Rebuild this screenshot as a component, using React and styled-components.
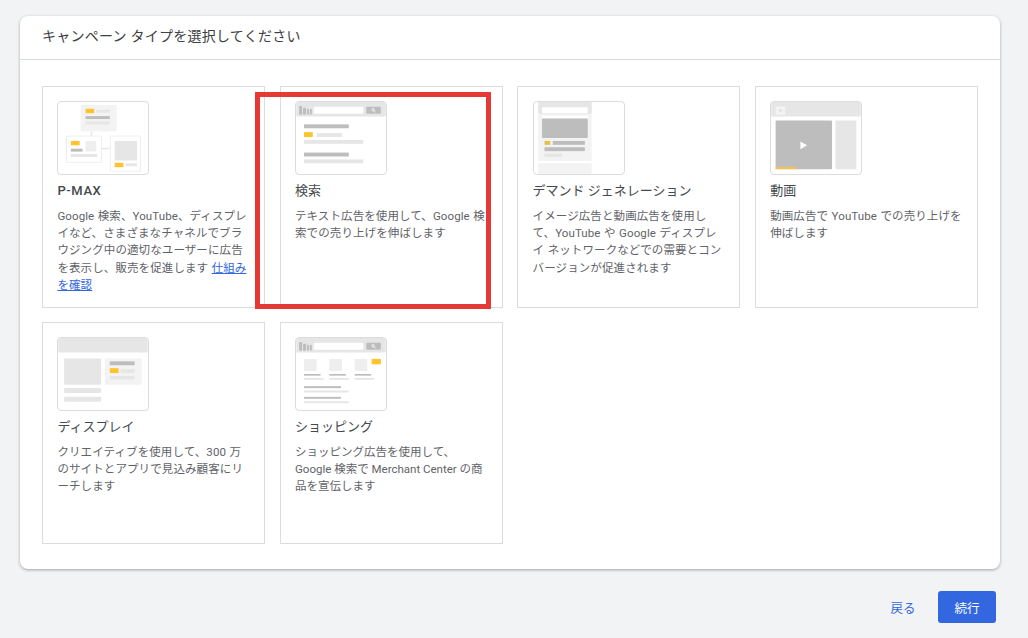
import React from 'react';
import styled, { createGlobalStyle } from 'styled-components';

const GlobalStyle = createGlobalStyle`
  html, body {
    margin: 0;
    height: 100%;
    background-color: #f1f3f4;
  }
  body {
    font-family: Roboto, 'Noto Sans CJK JP', sans-serif;
    overflow: hidden;
  }
  * {
    box-sizing: border-box;
  }
`;

const Page = styled.div`
  width: 1028px;
  height: 638px;
  padding: 16px 28px 0 20px;
`;

const Panel = styled.section`
  width: 980px;
  height: 553px;
  background-color: #fff;
  border-radius: 8px;
  box-shadow: 0 1px 3px rgba(60, 64, 67, 0.45);
`;

const PanelHeader = styled.h1`
  margin: 0;
  height: 44px;
  padding: 0 22px 6px;
  display: flex;
  align-items: center;
  border-bottom: 1px solid #dadce0;
  font-size: 14px;
  font-weight: 400;
  letter-spacing: 0.25px;
  color: #3c4043;
`;

const CardGrid = styled.div`
  display: grid;
  grid-template-columns: repeat(4, 223px);
  grid-auto-rows: 222px;
  column-gap: 14.6px;
  row-gap: 14px;
  padding: 26px 22px 0;
`;

const Card = styled.article`
  position: relative;
  padding: 14px 15px 14px 14.4px;
  border: 1px solid #dadce0;
  background-color: #fff;
`;

const Highlight = styled.div`
  position: absolute;
  left: -26px;
  top: 5px;
  width: 236px;
  height: 217px;
  border: 5px solid #e53935;
  pointer-events: none;
`;

const Thumb = styled.svg`
  display: block;
  width: 92px;
  height: 74px;
  border: 1px solid #dadce0;
  border-radius: 4px;
  background-color: #fff;
`;

const CardTitle = styled.h2`
  margin: 7px 0 0;
  font-size: 13px;
  line-height: 18px;
  font-weight: ${({ $bold }) => ($bold ? 500 : 400)};
  letter-spacing: ${({ $bold }) => ($bold ? '0.6px' : '0')};
  color: #45494d;
`;

const CardText = styled.p`
  margin: 8px 0 0;
  font-size: 11.5px;
  line-height: 17.2px;
  letter-spacing: ${({ $tight }) => ($tight ? '0' : '0.1px')};
  word-spacing: ${({ $tight }) => ($tight ? '0' : '0.5px')};
  color: #5f6368;
`;

const LearnLink = styled.a`
  color: #3367e0;
  text-decoration: underline;
`;

const Footer = styled.footer`
  display: flex;
  justify-content: flex-end;
  align-items: center;
  gap: 9px;
  margin-top: 22px;
  width: 976px;
`;

const BackButton = styled.button`
  width: 52px;
  height: 32px;
  border: 0;
  padding: 0;
  background: none;
  font: inherit;
  font-size: 12.5px;
  color: #3367e0;
`;

const NextButton = styled(BackButton)`
  width: 58px;
  background-color: #3367e0;
  border-radius: 3px;
  color: #fff;
`;

const YELLOW = '#ffc42d';
const DARK = '#bdbdbd';
const MID = '#e6e6e6';
const PALE = '#f3f3f3';

// each row: x, y, w, h, fill
const Bars = ({ rows }) =>
  rows.map(([x, y, w, h, fill], i) => (
    <rect key={i} x={x} y={y} width={w} height={h} fill={fill} rx={h > 4.5 && fill !== YELLOW ? 1 : 0} />
  ));

const searchBar = [
  [0, 0, 92, 15, MID],
  [3, 4, 3, 9, DARK],
  [7, 6, 3, 7, DARK],
  [11, 7, 2, 6, DARK],
  [14, 7, 2, 6, DARK],
  [18, 5, 51, 7, '#fff'],
  [72, 5, 15, 7, DARK],
];

const Magnifier = () => (
  <g stroke="#fff" fill="none" strokeWidth="0.8">
    <circle cx="79" cy="8" r="1.3" />
    <path d="M80 9l1.6 1.5" />
  </g>
);

const thumbs = {
  pmax: (
    <>
      <Bars
        rows={[
          [23, 3, 37, 27, PALE],
          [28, 7, 9, 4.5, YELLOW],
          [39, 8, 14, 3, MID],
          [28, 14.5, 25, 3, DARK],
          [28, 20, 25, 3, MID],
          [33.5, 30, 1.5, 5, MID],
          [45, 47, 8, 1.5, MID],
          [13, 40, 9, 4.5, YELLOW],
          [28, 40, 11, 11, '#eeeeee'],
          [13, 48, 12, 3, DARK],
          [13, 53.5, 27, 3, MID],
          [58, 40, 23, 20, MID],
          [58, 62.5, 9, 4.5, YELLOW],
          [69, 63, 12, 3, MID],
        ]}
      />
      <rect x="8.5" y="35" width="36" height="27" fill="none" stroke="#eeeeee" />
      <rect x="53.5" y="35" width="31" height="36" fill="none" stroke="#eeeeee" />
    </>
  ),
  search: (
    <>
      <Bars
        rows={[
          ...searchBar,
          [8, 23, 46, 4, DARK],
          [8, 31, 9, 5, YELLOW],
          [21, 32, 26, 4, MID],
          [8, 39, 61, 4, MID],
          [8, 52, 46, 4, DARK],
          [8, 59, 61, 4, MID],
        ]}
      />
      <Magnifier />
    </>
  ),
  demand: (
    <Bars
      rows={[
        [4, 0, 55, 74, PALE],
        [4, 0, 55, 12, MID],
        [8, 5.5, 47, 6, '#fff'],
        [8, 14, 47, 3, '#fff'],
        [8, 17, 47, 20, DARK],
        [10.5, 40, 6, 4, '#e6c04a'],
        [19, 40, 33, 4, DARK],
        [10.5, 46.5, 41.5, 4, DARK],
        [10.5, 53, 18, 3.5, MID],
        [4, 60.5, 55, 2.5, '#fff'],
      ]}
    />
  ),
  video: (
    <>
      <Bars
        rows={[
          [0, 0, 92, 15, MID],
          [4.5, 4.5, 10, 8.5, PALE],
          [4.5, 19, 58, 50, DARK],
          [66, 19, 21.5, 50, MID],
        ]}
      />
      <path d="M8.5 6.8l3.2 2-3.2 2z" fill="#dddddd" />
      <path d="M30 40.5l6.8 4-6.8 4z" fill="#fff" />
      <rect x="4.5" y="67" width="22" height="2" fill="#f4c44c" />
    </>
  ),
  display: (
    <Bars
      rows={[
        [0, 0, 92, 15, MID],
        [6, 21, 38, 27, MID],
        [48, 21, 38, 27, PALE],
        [53, 24, 25.5, 4, DARK],
        [53, 31, 9, 5, YELLOW],
        [64, 32, 14.5, 4, MID],
        [53, 39, 25.5, 3.5, MID],
        [6, 51.5, 38, 5, MID],
        [6, 60.5, 38, 5, MID],
      ]}
    />
  ),
  shopping: (
    <>
      <Bars
        rows={[
          ...searchBar,
          [8, 21.5, 13, 12.5, '#eeeeee'],
          [34, 21.5, 13, 12.5, '#eeeeee'],
          [60, 21.5, 13, 12.5, '#eeeeee'],
          [77.5, 21.5, 9.5, 5.5, YELLOW],
          [8, 37, 17, 1.7, DARK],
          [34, 37, 17, 1.7, DARK],
          [60, 37, 17, 1.7, DARK],
          [8, 41, 20, 2, MID],
          [34, 41, 20, 2, MID],
          [60, 41, 20, 2, MID],
          [8, 49.5, 38, 2, DARK],
          [8, 54, 46, 2, MID],
          [8, 60.5, 38, 2, DARK],
          [8, 65, 46, 2, MID],
        ]}
      />
      <Magnifier />
    </>
  ),
};

const campaigns = [
  {
    id: 'pmax',
    title: 'P-MAX',
    bold: true,
    text: 'Google 検索、YouTube、ディスプレイなど、さまざまなチャネルでブラウジング中の適切なユーザーに広告を表示し、販売を促進します ',
    link: '仕組みを確認',
  },
  {
    id: 'search',
    title: '検索',
    text: 'テキスト広告を使用して、Google 検索での売り上げを伸ばします',
    selected: true,
  },
  {
    id: 'demand',
    title: 'デマンド ジェネレーション',
    text: 'イメージ広告と動画広告を使用して、YouTube や Google ディスプレイ ネットワークなどでの需要とコンバージョンが促進されます',
  },
  {
    id: 'video',
    title: '動画',
    text: '動画広告で YouTube での売り上げを伸ばします',
  },
  {
    id: 'display',
    title: 'ディスプレイ',
    text: 'クリエイティブを使用して、300 万のサイトとアプリで見込み顧客にリーチします',
  },
  {
    id: 'shopping',
    title: 'ショッピング',
    text: 'ショッピング広告を使用して、Google 検索で Merchant Center の商品を宣伝します',
    tight: true,
  },
];

export default function App() {
  return (
    <Page>
      <GlobalStyle />
      <Panel>
        <PanelHeader>キャンペーン タイプを選択してください</PanelHeader>
        <CardGrid>
          {campaigns.map(c => (
            <Card key={c.id}>
              <Thumb viewBox="0 0 92 74">{thumbs[c.id]}</Thumb>
              <CardTitle $bold={c.bold}>{c.title}</CardTitle>
              <CardText $tight={c.tight}>
                {c.text}
                {c.link && <LearnLink href="#">{c.link}</LearnLink>}
              </CardText>
              {c.selected && <Highlight />}
            </Card>
          ))}
        </CardGrid>
      </Panel>
      <Footer>
        <BackButton>戻る</BackButton>
        <NextButton>続行</NextButton>
      </Footer>
    </Page>
  );
}
